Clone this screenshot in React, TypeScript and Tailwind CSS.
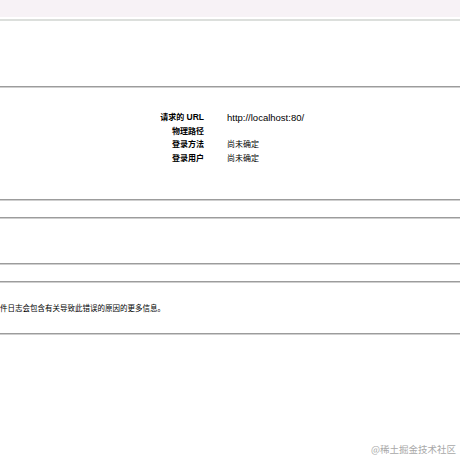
import React from "react";

const Line = () => (
  <div className="h-[2px] border-t border-[#9c9c9c] border-b border-b-[#cfcfcf]" />
);

export default function App() {
  const rows: [string, string][] = [
    ["请求的 URL", "http://localhost:80/"],
    ["物理路径", ""],
    ["登录方法", "尚未确定"],
    ["登录用户", "尚未确定"],
  ];
  return (
    <div
      className="relative w-[460px] h-[460px] bg-white overflow-hidden text-black"
      style={{ fontFamily: '"Liberation Sans", "Noto Sans CJK SC", sans-serif' }}
    >
      <div className="h-[17px] bg-[#f7f2f6]" />
      <div className="h-[2px]" />
      <div className="h-[2px] bg-[#dcdfdc]" />
      <div className="h-[65px]" />
      <Line />
      <div className="h-[23px]" />
      <div className="flex flex-col">
        {rows.map(([k, v]) => (
          <div key={k} className="flex h-[13.6px] items-center text-[8px] leading-[13px]">
            <div className="w-[204px] text-right font-bold h-[13px]">
              {k.endsWith("URL") ? (
                <>
                  请求的 <span className="text-[8.5px]">URL</span>
                </>
              ) : (
                k
              )}
            </div>
            <div className="pl-[23px] h-[13px]">
              {v.startsWith("http") ? <span className="text-[9.5px]">{v}</span> : v}
            </div>
          </div>
        ))}
      </div>
      <div className="h-[34px]" />
      <Line />
      <div className="h-[16px]" />
      <Line />
      <div className="h-[44px]" />
      <Line />
      <div className="h-[16px]" />
      <Line />
      <div className="h-[22px]" />
      <div className="text-[7.5px] leading-none whitespace-nowrap">
        件日志会包含有关导致此错误的原因的更多信息。
      </div>
      <div className="h-[20px]" />
      <Line />
      <div
        className="absolute right-[4px] top-[445px] text-[9.5px] text-[#a8a8a8] leading-none"
        style={{ fontFamily: '"Noto Sans CJK SC", sans-serif' }}
      >
        @稀土掘金技术社区
      </div>
    </div>
  );
}
